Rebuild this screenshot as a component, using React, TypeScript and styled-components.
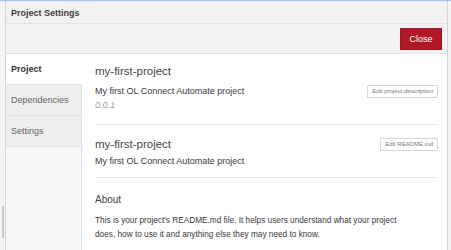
import React from "react";
import styled, { createGlobalStyle } from "styled-components";

const Global = createGlobalStyle`
  html, body { margin: 0; padding: 0; background: #f7f7f7; }
  body { font-family: "Liberation Sans", Arial, sans-serif; color: #333; }
  * { box-sizing: border-box; }
`;

const Frame = styled.div`
  width: 451px;
  height: 250px;
  display: flex;
  background: #f4f4f4;
  border-top: 1px solid #9fc3ea;
  overflow: hidden;
`;

const Gutter = styled.div`
  width: 6px;
  flex: none;
  position: relative;
  background: #f4f4f4;
  border-right: 1px solid #d4d4d4;
`;

const Thumb = styled.div`
  position: absolute;
  left: 2px;
  top: 205px;
  width: 2px;
  height: 32px;
  background: #c6c6c6;
`;

const Window = styled.div`
  flex: 1;
  display: flex;
  flex-direction: column;
  border-right: 1px solid #d4d4d4;
  margin-right: 3px;
`;

const TitleBar = styled.div`
  height: 23px;
  display: flex;
  align-items: center;
  padding: 1px 0 0 5px;
  background: #f2f2f2;
  border-bottom: 1px solid #e2e2e2;
  font-size: 9px;
  font-weight: bold;
  color: #3c3c3c;
`;

const Toolbar = styled.div`
  height: 30px;
  display: flex;
  align-items: center;
  justify-content: flex-end;
  padding-right: 5px;
  background: #f2f2f2;
  border-bottom: 1px solid #e2e2e2;
`;

const CloseButton = styled.button`
  width: 42px;
  height: 22px;
  border: 1px solid #a51523;
  background: #b01827;
  color: #fff;
  font-family: "Liberation Sans", Arial, sans-serif;
  font-size: 9px;
  padding: 0;
`;

const Body = styled.div`
  flex: 1;
  display: flex;
  min-height: 0;
`;

const Sidebar = styled.div`
  width: 76px;
  flex: none;
  background: #f7f7f7;
  border-right: 1px solid #e2e2e2;
  display: flex;
  flex-direction: column;
`;

const Tab = styled.div<{ $active?: boolean }>`
  height: 31px;
  display: flex;
  align-items: center;
  padding-left: 5px;
  font-size: 9px;
  font-weight: ${(p) => (p.$active ? "bold" : "normal")};
  color: ${(p) => (p.$active ? "#333" : "#666")};
  background: ${(p) => (p.$active ? "#fff" : "#eeeeee")};
  border-bottom: 1px solid #e2e2e2;
  margin-right: ${(p) => (p.$active ? "-1px" : "0")};
`;

const Content = styled.div`
  flex: 1;
  background: #fff;
  padding: 10px 9px 0 13px;
  display: flex;
  flex-direction: column;
`;

const Section = styled.div`
  display: flex;
  flex-direction: column;
`;

const Heading = styled.div<{ $size?: number }>`
  font-size: ${(p) => p.$size ?? 11.5}px;
  color: #444;
  line-height: 14px;
`;

const Row = styled.div<{ $mt?: number }>`
  display: flex;
  align-items: center;
  justify-content: space-between;
  margin-top: ${(p) => p.$mt ?? 0}px;
`;

const Text = styled.div<{ $mt?: number }>`
  font-size: 9px;
  line-height: 14px;
  color: #3a3a3a;
  margin-top: ${(p) => p.$mt ?? 0}px;
`;

const Version = styled.div`
  font-size: 9px;
  font-style: italic;
  color: #a0a0a0;
  line-height: 14px;
`;

const SmallButton = styled.button`
  height: 13px;
  padding: 0 4px;
  border: 1px solid #d6d6d6;
  background: #fff;
  color: #777;
  font-family: "Liberation Sans", Arial, sans-serif;
  font-size: 6px;
  border-radius: 1px;
`;

const Rule = styled.div<{ $top: number; $bottom: number }>`
  height: 1px;
  background: #e6e6e6;
  margin: ${(p) => `${p.$top}px 0 ${p.$bottom}px`};
`;

const Paragraph = styled.div`
  font-size: 8.25px;
  line-height: 14px;
  color: #3a3a3a;
  margin-top: 7px;
  padding-right: 20px;
`;

export default function App() {
  return (
    <>
      <Global />
      <Frame>
        <Gutter>
          <Thumb />
        </Gutter>
        <Window>
          <TitleBar>Project Settings</TitleBar>
          <Toolbar>
            <CloseButton>Close</CloseButton>
          </Toolbar>
          <Body>
            <Sidebar>
              <Tab $active>Project</Tab>
              <Tab>Dependencies</Tab>
              <Tab>Settings</Tab>
            </Sidebar>
            <Content>
              <Section>
                <Heading>my-first-project</Heading>
                <Row $mt={6}>
                  <Text>My first OL Connect Automate project</Text>
                  <SmallButton>Edit project description</SmallButton>
                </Row>
                <Version>0.0.1</Version>
              </Section>
              <Rule $top={12} $bottom={12} />
              <Section>
                <Row>
                  <Heading>my-first-project</Heading>
                  <SmallButton>Edit README.md</SmallButton>
                </Row>
                <Text $mt={3}>My first OL Connect Automate project</Text>
              </Section>
              <Rule $top={9} $bottom={15} />
              <Section>
                <Heading $size={10}>About</Heading>
                <Paragraph>
                  This is your project's README.md file. It helps users understand what your project does, how to use it and anything else they may need to know.
                </Paragraph>
              </Section>
            </Content>
          </Body>
        </Window>
      </Frame>
    </>
  );
}
